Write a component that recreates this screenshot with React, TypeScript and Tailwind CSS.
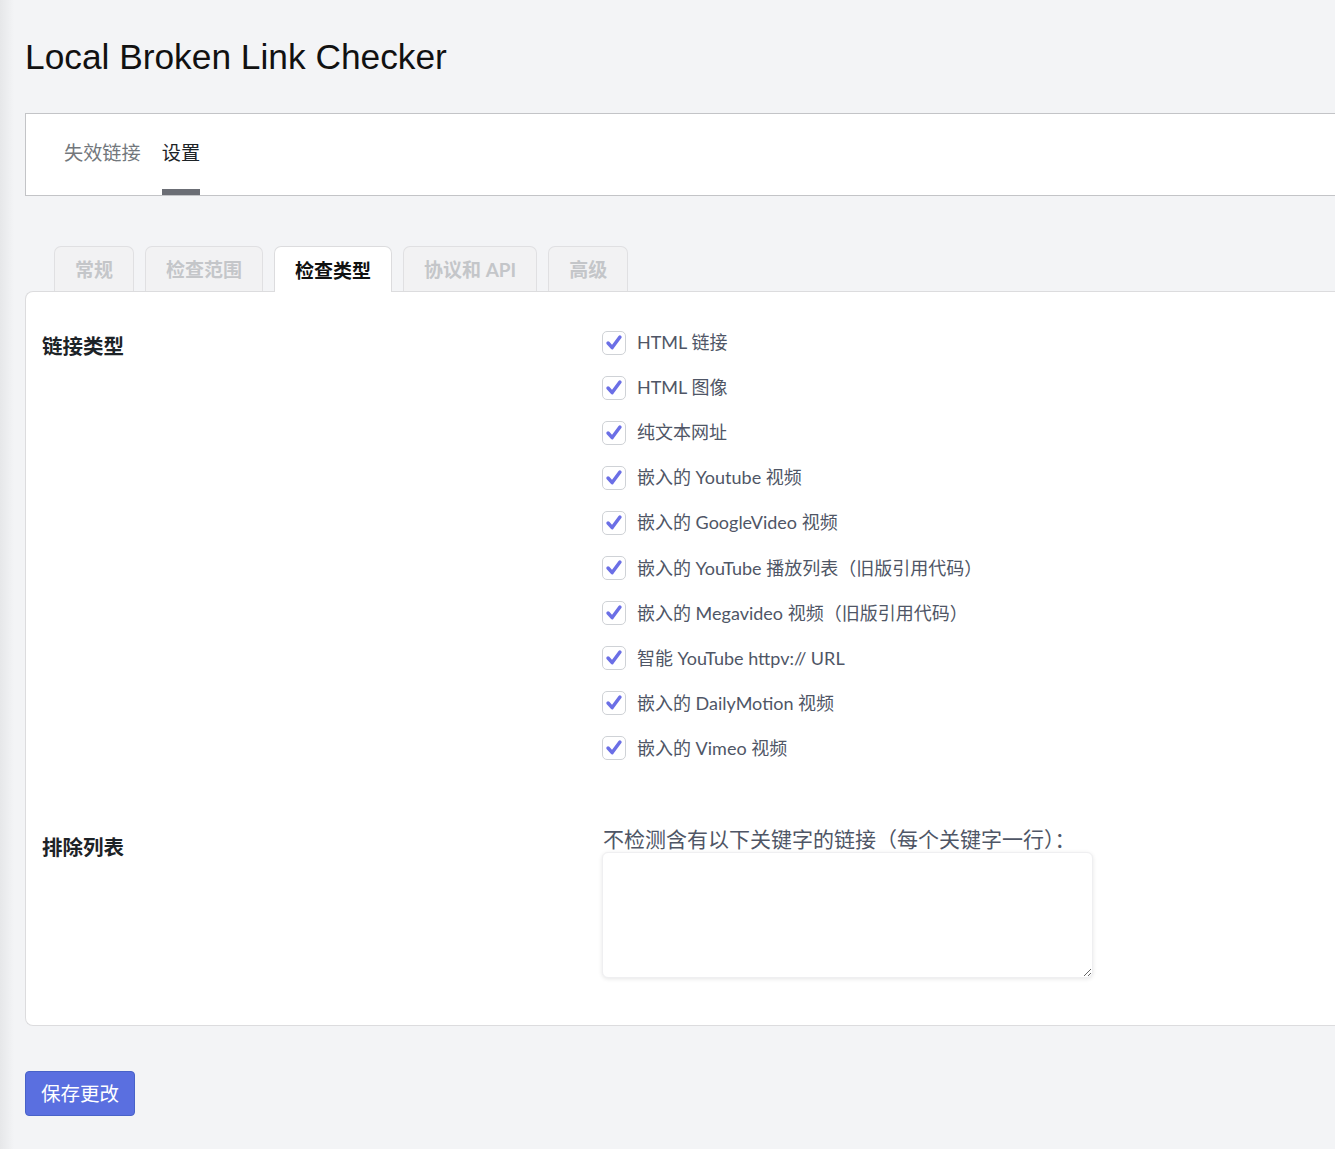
import React, { useState } from 'react';

const linkTypes = [
  'HTML 链接',
  'HTML 图像',
  '纯文本网址',
  '嵌入的 Youtube 视频',
  '嵌入的 GoogleVideo 视频',
  '嵌入的 YouTube 播放列表（旧版引用代码）',
  '嵌入的 Megavideo 视频（旧版引用代码）',
  '智能 YouTube httpv:// URL',
  '嵌入的 DailyMotion 视频',
  '嵌入的 Vimeo 视频',
];

const subTabs = ['常规', '检查范围', '检查类型', '协议和 API', '高级'];

const CheckBox: React.FC<{ checked: boolean; onToggle: () => void }> = ({ checked, onToggle }) => (
  <button
    type="button"
    onClick={onToggle}
    className="w-[24px] h-[24px] shrink-0 rounded-[5px] border border-[#cfd2d6] bg-white flex items-center justify-center"
  >
    {checked && (
      <svg viewBox="0 0 24 24" className="w-[22px] h-[22px]">
        <path
          d="M5.5 12 L10 17 L18.5 5.5"
          fill="none"
          stroke="#6b6fe6"
          strokeWidth="3.8"
          strokeLinecap="round"
          strokeLinejoin="round"
        />
      </svg>
    )}
  </button>
);

export default function App() {
  const [checked, setChecked] = useState<boolean[]>(linkTypes.map(() => true));
  const [activeTab, setActiveTab] = useState(2);

  const toggle = (i: number) =>
    setChecked((prev) => prev.map((c, idx) => (idx === i ? !c : c)));

  return (
    <div
      className="min-h-[1149px] flex bg-[#f3f4f6] overflow-hidden"
      style={{ fontFamily: 'Lato, "Noto Sans CJK SC", sans-serif' }}
    >
      {/* admin sidebar edge */}
      <div className="w-[14px] shrink-0 bg-gradient-to-r from-[#e6e7e9] to-[#f3f4f6]" />

      <div className="flex-1 pl-[11px] pt-[36px]">
        <h1
          className="text-[35.3px] leading-[42px] text-[#111]"
          style={{ fontFamily: '"Liberation Sans", Arial, sans-serif' }}
        >
          Local Broken Link Checker
        </h1>

        {/* Top navigation */}
        <div className="mt-[35px] h-[83px] bg-white border border-r-0 border-[#c3c4c7] flex pl-[38px] gap-[21px]">
          <div className="flex items-center pt-[3px] text-[19.2px] text-[#72777c] border-b-[6px] border-transparent">
            失效链接
          </div>
          <div className="flex items-center pt-[3px] text-[19.2px] text-[#1d2327] border-b-[6px] border-[#6b6e75]">
            设置
          </div>
        </div>

        {/* Settings sub tabs */}
        <div className="mt-[50px] pl-[29px] flex gap-[11px] relative z-10">
          {subTabs.map((t, i) => (
            <button
              key={t}
              type="button"
              onClick={() => setActiveTab(i)}
              className={
                i === activeTab
                  ? 'h-[46px] mb-[-1px] pt-[3px] px-[20px] rounded-t-[7px] border border-b-0 border-[#dcdcde] bg-white text-[19px] font-bold text-[#111]'
                  : 'h-[45px] pt-[3px] px-[20px] rounded-t-[7px] border border-b-0 border-[#e0e0e2] bg-[#f2f2f3] text-[19px] font-bold text-[#c4c6c9]'
              }
            >
              {t}
            </button>
          ))}
        </div>

        {/* Panel */}
        <div className="bg-white border border-r-0 border-[#dcdcde] rounded-l-[8px] pl-[16px] pt-[28px] pb-[47px]">
          <div className="grid grid-cols-[560px_1fr]">
            <div className="mt-[11px] text-[20.5px] leading-[30px] font-bold text-[#1d2327]">链接类型</div>
            <div className="flex flex-col">
              {linkTypes.map((label, i) => (
                <label key={label} className="h-[45.1px] flex items-center gap-[11px] text-[18px] text-[#4f5666] cursor-pointer">
                  <CheckBox checked={checked[i]} onToggle={() => toggle(i)} />
                  <span>{label}</span>
                </label>
              ))}
            </div>
          </div>

          <div className="grid grid-cols-[560px_1fr] mt-[53px]">
            <div className="mt-[8px] text-[20.5px] leading-[30px] font-bold text-[#1d2327]">排除列表</div>
            <div className="flex flex-col">
              <div className="pl-[1px] text-[21px] leading-[29px] text-[#4f5666]">
                不检测含有以下关键字的链接（每个关键字一行）：
              </div>
              <textarea className="w-[491px] h-[126px] mt-[-1px] rounded-[6px] border border-[#efeff1] bg-white shadow-[0_1px_4px_rgba(0,0,0,0.1)] outline-none p-2 text-[16px]" />
            </div>
          </div>
        </div>

        <button
          type="button"
          className="mt-[45px] h-[45px] px-[15px] rounded-[4px] bg-[#5a6fe0] border border-[#4862c8] text-white text-[19.5px]"
        >
          保存更改
        </button>
      </div>
    </div>
  );
}
